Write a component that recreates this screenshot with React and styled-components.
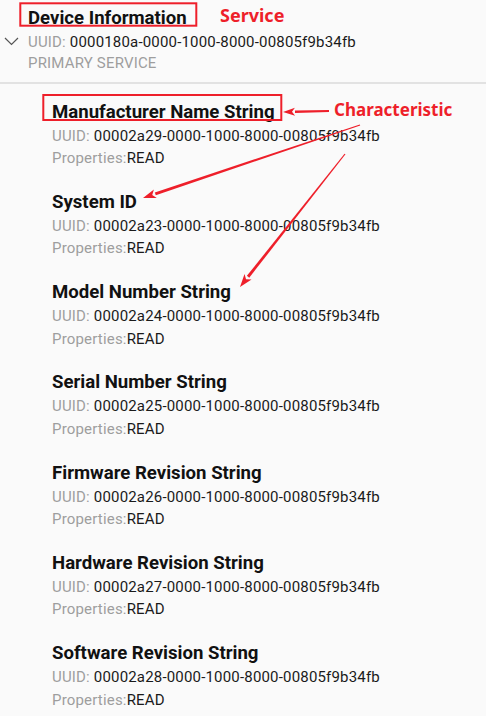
import React from "react";
import styled, { createGlobalStyle } from "styled-components";

const Global = createGlobalStyle`
  html, body { margin: 0; padding: 0; background: #fafafa; }
  body { font-family: Roboto, "Noto Sans", "Liberation Sans", sans-serif; }
`;

const Page = styled.div`
  position: relative;
  width: 486px;
  height: 716px;
  overflow: hidden;
  background: #fafafa;
`;

const ServiceHeader = styled.div`
  display: grid;
  grid-template-columns: 28px 1fr;
  padding: 6px 0 8px 0;
  border-bottom: 2px solid #e2e2e2;
`;

const ServiceTitle = styled.div`
  grid-column: 2;
  font-size: 18.6px;
  line-height: 25px;
  font-weight: 700;
  color: #111;
  margin-bottom: 1px;
`;

const Chevron = styled.svg`
  grid-column: 1;
  grid-row: 2;
  margin: 5px 0 0 4px;
  display: block;
`;

const InfoLine = styled.div`
  grid-column: 2;
  font-size: 15px;
  letter-spacing: 0.18px;
  line-height: ${(p) => p.$lh || 21}px;
  color: #1a1a1a;
  white-space: nowrap;
`;

const Label = styled.span`
  color: #9e9e9e;
`;

const ServiceType = styled.div`
  grid-column: 2;
  font-size: 15px;
  letter-spacing: 0.18px;
  line-height: 21px;
  color: #9e9e9e;
`;

const CharList = styled.div`
  display: flex;
  flex-direction: column;
  gap: 20.3px;
  padding: 15.5px 0 0 52px;
`;

const Char = styled.div`
  display: flex;
  flex-direction: column;
`;

const CharTitle = styled.div`
  font-size: 18.6px;
  line-height: 25px;
  font-weight: 700;
  color: #111;
`;

const Overlay = styled.svg`
  position: absolute;
  left: 0;
  top: 0;
  pointer-events: none;
`;

const Note = styled.div`
  position: absolute;
  left: ${(p) => p.$x}px;
  top: ${(p) => p.$y}px;
  font-family: "Noto Sans", "Open Sans", sans-serif;
  font-weight: 700;
  font-size: ${(p) => p.$size}px;
  line-height: 22px;
  color: #ee1f2a;
  white-space: nowrap;
`;

const chars = [
  ["Manufacturer Name String", "00002a29-0000-1000-8000-00805f9b34fb"],
  ["System ID", "00002a23-0000-1000-8000-00805f9b34fb"],
  ["Model Number String", "00002a24-0000-1000-8000-00805f9b34fb"],
  ["Serial Number String", "00002a25-0000-1000-8000-00805f9b34fb"],
  ["Firmware Revision String", "00002a26-0000-1000-8000-00805f9b34fb"],
  ["Hardware Revision String", "00002a27-0000-1000-8000-00805f9b34fb"],
  ["Software Revision String", "00002a28-0000-1000-8000-00805f9b34fb"],
];

function Arrow({ x1, y1, x2, y2, w1 = 1.2, w2 = 3, hl = 13, hw = 4.5 }) {
  const dx = x2 - x1;
  const dy = y2 - y1;
  const len = Math.hypot(dx, dy);
  const ux = dx / len;
  const uy = dy / len;
  const nx = -uy;
  const ny = ux;
  const bx = x2 - ux * hl;
  const by = y2 - uy * hl;
  const shaft = [
    [x1 + nx * w1 / 2, y1 + ny * w1 / 2],
    [bx + nx * w2 / 2, by + ny * w2 / 2],
    [bx - nx * w2 / 2, by - ny * w2 / 2],
    [x1 - nx * w1 / 2, y1 - ny * w1 / 2],
  ];
  const head = [
    [x2, y2],
    [bx + nx * hw, by + ny * hw],
    [x2 - ux * hl * 0.75, y2 - uy * hl * 0.75],
    [bx - nx * hw, by - ny * hw],
  ];
  const pts = (a) => a.map((p) => p.map((v) => v.toFixed(2)).join(",")).join(" ");
  return (
    <g fill="#ee1f2a">
      <polygon points={pts(shaft)} />
      <polygon points={pts(head)} />
    </g>
  );
}

export default function App() {
  return (
    <>
      <Global />
      <Page>
        <ServiceHeader>
          <ServiceTitle>Device Information</ServiceTitle>
          <Chevron width="16" height="9" viewBox="0 0 16 9">
            <polyline points="1,1 7.5,7.5 14,1" fill="none" stroke="#555" strokeWidth="1.2" />
          </Chevron>
          <InfoLine>
            <Label>UUID: </Label>0000180a-0000-1000-8000-00805f9b34fb
          </InfoLine>
          <ServiceType>PRIMARY SERVICE</ServiceType>
        </ServiceHeader>
        <CharList>
          {chars.map(([name, uuid]) => (
            <Char key={uuid}>
              <CharTitle>{name}</CharTitle>
              <InfoLine $lh={22.5}>
                <Label>UUID: </Label>
                {uuid}
              </InfoLine>
              <InfoLine $lh={22.5}>
                <Label>Properties:</Label>READ
              </InfoLine>
            </Char>
          ))}
        </CharList>

        <Overlay width="486" height="716" viewBox="0 0 486 716">
          <rect x="20.3" y="3.3" width="176" height="22.4" fill="none" stroke="#ee1f2a" strokeWidth="2" />
          <rect x="43.3" y="95" width="238" height="25" fill="none" stroke="#ee1f2a" strokeWidth="2" />
          <Arrow x1={329} y1={111} x2={283} y2={112} w1={2} w2={2.5} hl={12} hw={4} />
          <Arrow x1={360} y1={125} x2={143} y2={198} />
          <Arrow x1={345} y1={154} x2={240} y2={287} />
        </Overlay>
        <Note $x={220} $y={4} $size={18}>Service</Note>
        <Note $x={334} $y={99} $size={17}>Characteristic</Note>
      </Page>
    </>
  );
}
